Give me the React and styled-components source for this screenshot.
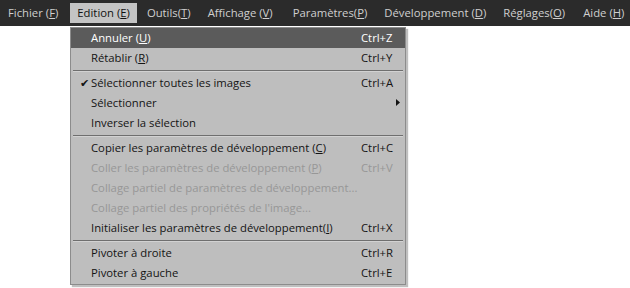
import React from 'react'
import styled, { createGlobalStyle } from 'styled-components'

const GlobalStyle = createGlobalStyle`
  html, body {
    margin: 0;
    padding: 0;
    background: #ffffff;
  }
  body {
    font-family: "Open Sans", "Noto Sans", sans-serif;
    font-size: 11.3px;
  }
`

const Page = styled.div`
  position: relative;
  width: 630px;
  height: 288px;
  background: #ffffff;
  overflow: hidden;
`

const MenuBar = styled.div`
  display: flex;
  align-items: center;
  height: 26px;
  padding-left: 1px;
  background: #2b2b2b;
`

const BarItem = styled.div`
  display: flex;
  align-items: center;
  box-sizing: border-box;
  height: 20px;
  padding: 0 7px 1px;
  margin-left: ${props => props.gap || 0}px;
  color: ${props => (props.active ? '#111111' : '#cfcfcf')};
  background: ${props => (props.active ? '#c4c4c4' : 'transparent')};
  white-space: nowrap;
`

const Dropdown = styled.div`
  position: absolute;
  left: 70px;
  top: 27px;
  width: 334px;
  padding-bottom: 1px;
  background: #bebebe;
  border: 1px solid #8c8c8c;
  box-shadow: 2px 2px 1px rgba(0, 0, 0, 0.25);
`

const Row = styled.div`
  display: grid;
  grid-template-columns: 20px 270px 1fr;
  align-items: center;
  box-sizing: border-box;
  height: 20px;
  padding-bottom: 2px;
  color: ${props => (props.disabled ? '#979797' : props.active ? '#ffffff' : '#141414')};
  background: ${props => (props.active ? '#5b5b5b' : 'transparent')};
  white-space: nowrap;
`

const Check = styled.span`
  display: flex;
  justify-content: center;
  padding-left: 7px;
  font-size: 11px;
`

const Label = styled.span``

const Shortcut = styled.span``

const Arrow = styled.span`
  display: flex;
  justify-content: flex-end;
  padding-right: 5px;
`

const Separator = styled.div`
  height: 5px;
  display: flex;
  align-items: center;
  padding: 0 2px;

  &::before {
    content: '';
    flex: 1;
    height: 1px;
    background: #6f6f6f;
    border-bottom: 1px solid #d2d2d2;
  }
`

const bar = [
  { text: 'Fichier', key: 'F', space: true, gap: 0 },
  { text: 'Edition', key: 'E', space: true, active: true, gap: 5 },
  { text: 'Outils', key: 'T', gap: 3 },
  { text: 'Affichage', key: 'V', space: true, gap: 3 },
  { text: 'Paramètres', key: 'P', gap: 6 },
  { text: 'Développement', key: 'D', space: true, gap: 3 },
  { text: 'Réglages', key: 'O', gap: 3 },
  { text: 'Aide', key: 'H', space: true, gap: 4 },
]

const items = [
  { label: 'Annuler ', key: 'U', shortcut: 'Ctrl+Z', active: true },
  { label: 'Rétablir ', key: 'R', shortcut: 'Ctrl+Y' },
  { sep: true },
  { label: 'Sélectionner toutes les images', shortcut: 'Ctrl+A', checked: true },
  { label: 'Sélectionner', submenu: true },
  { label: 'Inverser la sélection' },
  { sep: true },
  { label: 'Copier les paramètres de développement ', key: 'C', shortcut: 'Ctrl+C' },
  { label: 'Coller les paramètres de développement ', key: 'P', shortcut: 'Ctrl+V', disabled: true },
  { label: 'Collage partiel de paramètres de développement...', disabled: true },
  { label: "Collage partiel des propriétés de l'image...", disabled: true },
  { label: 'Initialiser les paramètres de développement', key: 'I', shortcut: 'Ctrl+X' },
  { sep: true },
  { label: 'Pivoter à droite', shortcut: 'Ctrl+R' },
  { label: 'Pivoter à gauche', shortcut: 'Ctrl+E' },
]

const App = () => {
  return (
    <Page>
      <GlobalStyle />
      <MenuBar>
        {bar.map(item => (
          <BarItem key={item.text} active={item.active} gap={item.gap}>
            {item.text}{item.space ? ' ' : ''}(<u>{item.key}</u>)
          </BarItem>
        ))}
      </MenuBar>

      <Dropdown>
        {items.map((item, i) =>
          item.sep ? (
            <Separator key={i} />
          ) : (
            <Row key={i} active={item.active} disabled={item.disabled}>
              <Check>{item.checked ? '✔' : ''}</Check>
              <Label>
                {item.label}
                {item.key && <>(<u>{item.key}</u>)</>}
              </Label>
              {item.submenu ? (
                <Arrow>
                  <svg width="4" height="7" viewBox="0 0 4 7">
                    <path d="M0 0 L4 3.5 L0 7 Z" fill="#141414" />
                  </svg>
                </Arrow>
              ) : (
                <Shortcut>{item.shortcut}</Shortcut>
              )}
            </Row>
          )
        )}
      </Dropdown>
    </Page>
  )
}

export default App
